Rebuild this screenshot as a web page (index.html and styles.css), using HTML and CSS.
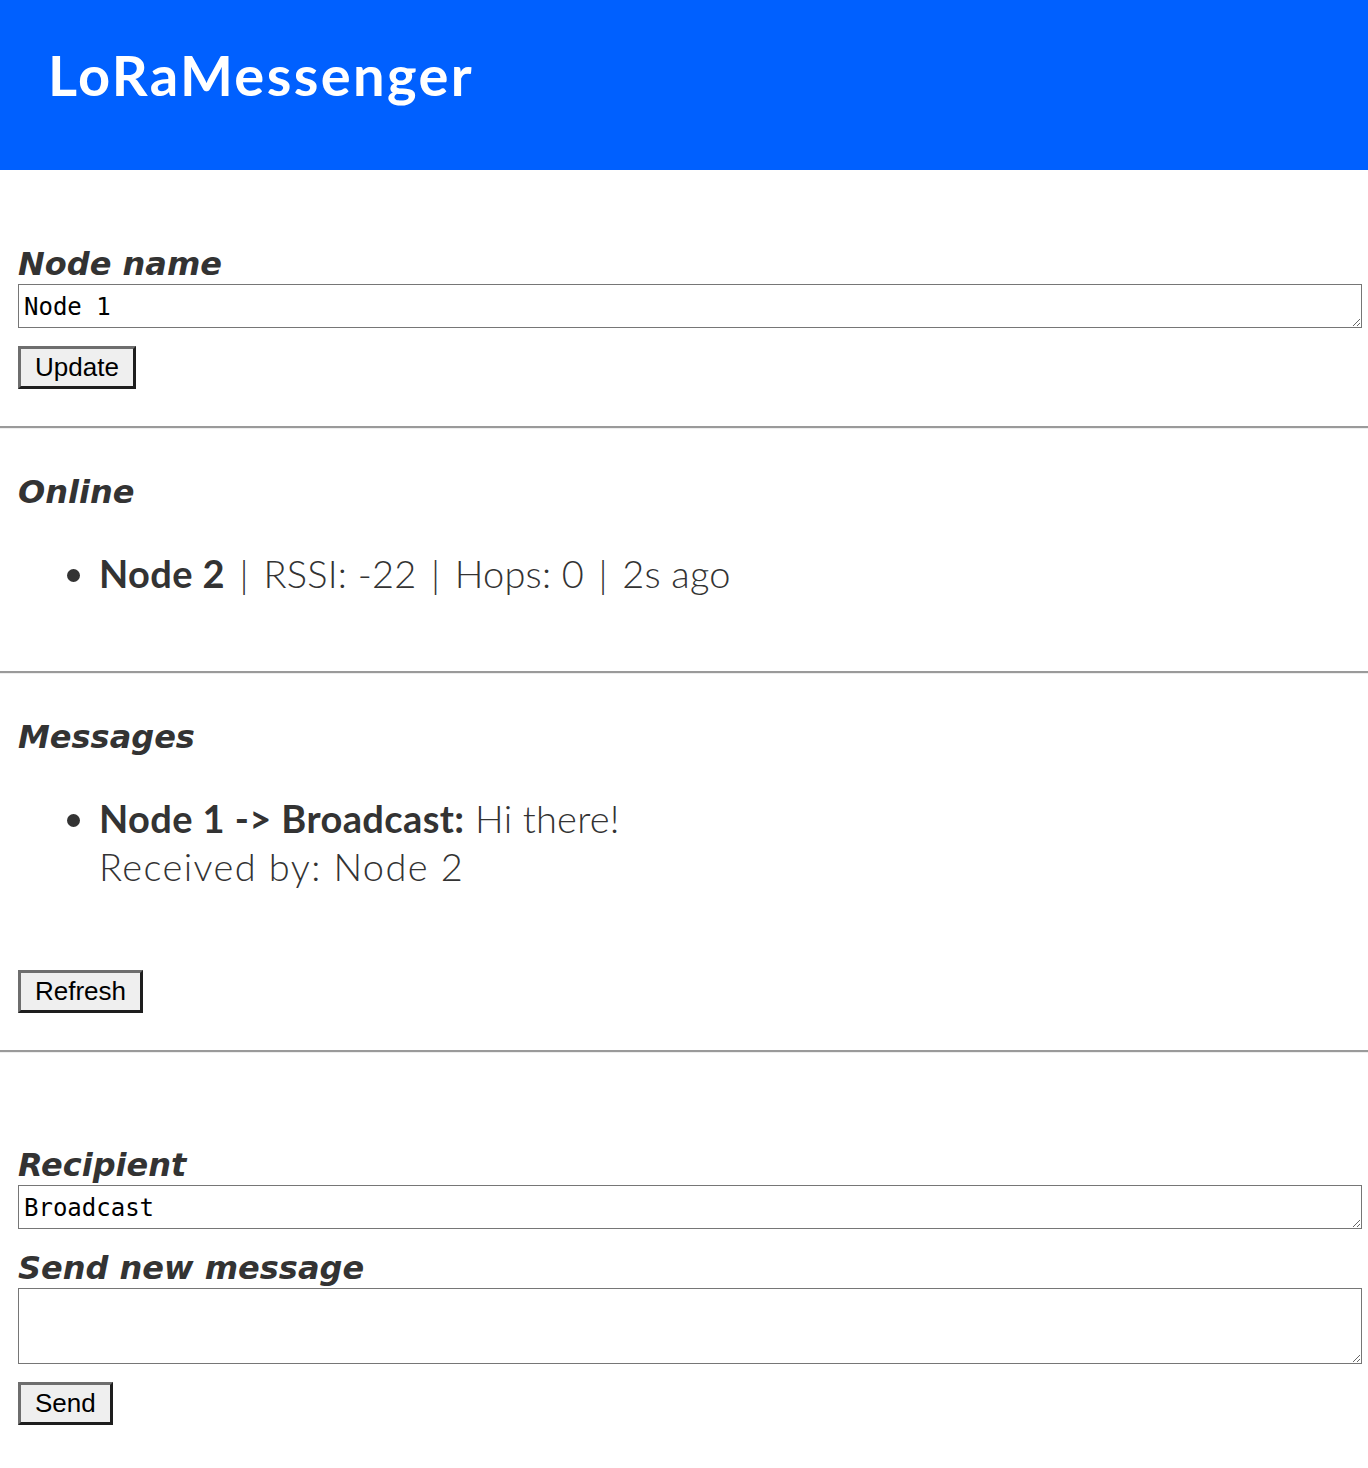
FILE: index.html
```html
<!DOCTYPE html>
<html>
<head>
<meta charset="utf-8">
<title>LoRaMessenger</title>
<link rel="stylesheet" href="styles.css">
</head>
<body>
<header class="topbar">
  <h1 class="brand">LoRaMessenger</h1>
</header>
<main class="content">
  <section class="section section-name">
    <label class="field-label">Node name</label>
    <textarea class="field field-single">Node 1</textarea>
    <button class="btn">Update</button>
  </section>
  <hr class="rule">
  <section class="section section-online">
    <h2 class="section-title">Online</h2>
    <ul class="list">
      <li><b>Node 2</b> <span class="sep">|</span> RSSI: -22 <span class="sep">|</span> Hops: 0 <span class="sep">|</span> 2s ago</li>
    </ul>
  </section>
  <hr class="rule">
  <section class="section section-messages">
    <h2 class="section-title">Messages</h2>
    <ul class="list">
      <li><b>Node 1 -&gt; Broadcast:</b> Hi there!<br><span class="received">Received by: Node 2</span></li>
    </ul>
    <button class="btn btn-refresh">Refresh</button>
  </section>
  <hr class="rule">
  <section class="section section-send">
    <label class="field-label">Recipient</label>
    <textarea class="field field-single">Broadcast</textarea>
    <label class="field-label label-message">Send new message</label>
    <textarea class="field field-multi"></textarea>
    <button class="btn">Send</button>
  </section>
</main>
</body>
</html>
```
FILE: styles.css
```css
html, body {
  margin: 0;
  padding: 0;
  background: #fff;
}
body {
  font-family: "Lato", "DejaVu Sans", sans-serif;
  color: #333;
}
.topbar {
  background: #0060ff;
  height: 170px;
  display: flex;
  align-items: center;
  padding: 0 48px;
  box-sizing: border-box;
}
.brand {
  margin: 0;
  color: #fff;
  font-size: 56px;
  font-weight: 700;
  letter-spacing: 2.4px;
  margin-top: -22px;
}
.content {
  display: flex;
  flex-direction: column;
}
.section {
  display: flex;
  flex-direction: column;
  align-items: flex-start;
  padding: 0 6px 0 18px;
}
.section-name {
  padding-top: 74px;
  padding-bottom: 37px;
}
.section-online {
  padding-top: 41px;
  padding-bottom: 74px;
}
.section-messages {
  padding-top: 41px;
  padding-bottom: 37px;
}
.section-send {
  padding-top: 92px;
  padding-bottom: 43px;
}
.field-label, .section-title {
  font-family: "DejaVu Sans", "Lato", sans-serif;
  font-size: 32px;
  font-weight: 700;
  font-style: italic;
  line-height: 44px;
  margin: 0;
  color: #333;
}
.field-label {
  line-height: 40px;
}
.label-message {
  margin-top: 19px;
}
.field {
  align-self: stretch;
  box-sizing: border-box;
  border: 1px solid #767676;
  font-family: "DejaVu Sans Mono", "Liberation Mono", monospace;
  font-size: 24px;
  padding: 8px 5px 0 5px;
  margin: 0;
  color: #000;
  background: #fff;
  resize: vertical;
  overflow: hidden;
}
.field-single {
  height: 44px;
}
.field-multi {
  height: 76px;
}
.btn {
  margin-top: 18px;
  font-family: "Liberation Sans", Arial, sans-serif;
  font-size: 26px;
  line-height: 31px;
  padding: 3px 14px;
  background: #efefef;
  color: #000;
  border: 3px solid;
  border-color: #6e6e6e #1e1e1e #1e1e1e #6e6e6e;
}
.btn-refresh {
  margin-top: 80px;
}
.list {
  margin: 35px 0 0 0;
  padding-left: 81px;
  font-size: 38px;
  line-height: 48px;
  font-weight: 300;
  letter-spacing: 0.2px;
}
.list b {
  font-weight: 700;
  letter-spacing: 0.4px;
}
.received {
  letter-spacing: 1.4px;
}
.sep {
  padding: 0 4px;
}
.rule {
  margin: 0;
  border: 0;
  border-top: 2px solid #9a9a9a;
  border-bottom: 1px solid #eee;
  height: 0;
}
```
